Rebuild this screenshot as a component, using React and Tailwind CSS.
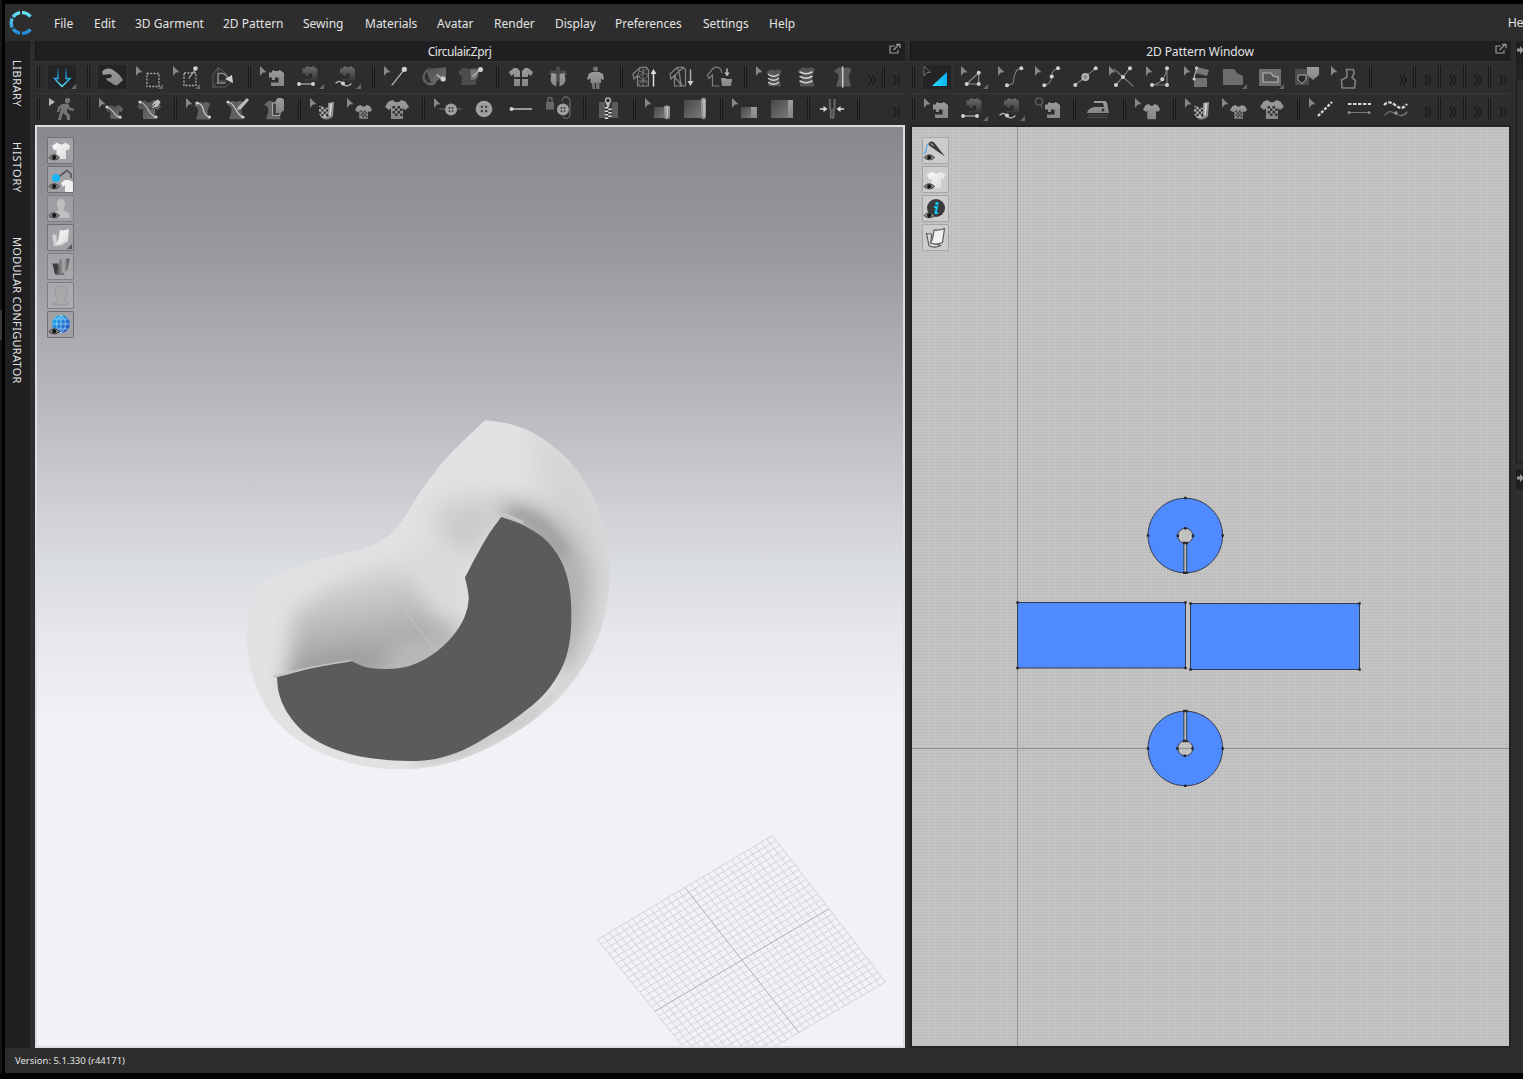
import React from "react";

const MENU = [
  ["File", "w-[40px]"], ["Edit", "w-[41px]"], ["3D Garment", "w-[88px]"], ["2D Pattern", "w-[80px]"],
  ["Sewing", "w-[62px]"], ["Materials", "w-[72px]"], ["Avatar", "w-[57px]"], ["Render", "w-[61px]"],
  ["Display", "w-[60px]"], ["Preferences", "w-[88px]"], ["Settings", "w-[66px]"], ["Help", "w-[40px]"],
];

/* ---------- shared glyph parts ---------- */
const G = "url(#metal)";
const D = "url(#dim)";
const at = (x, y, s = 1, sy = s) => `translate(${x} ${y}) scale(${s} ${sy})`;

const Cur = ({ x = 4, outline }) => (
  <path d={`M${x} 5l6.500 6.300-3.600.3L${x} 15z`} fill={outline ? "none" : "#888"} stroke={outline ? "#777" : "none"} strokeWidth=".9" />
);
const Corner = () => <path d="M31 23v5h-5z" fill="#696969" />;
const Dot = ({ x, y, r = 2 }) => <circle cx={x} cy={y} r={r} fill="#d0d0d0" />;
const Line = ({ d, w = 1.2, c = "#8d8d8d", dash }) => <path d={d} fill="none" stroke={c} strokeWidth={w} strokeDasharray={dash} strokeLinecap={dash ? "butt" : "round"} />;
const Machine = ({ x, y, f = G }) => (
  <g transform={at(x, y)} fill={f}>
    <path d="M0 2.500h3V1h9l3 2v13H2v-3.500h7.500V7.500H6V10H3V7.500H0zM4 0h1.200v1H4zM10 0h1.500v1H10z" />
  </g>
);
const Shirt = ({ x, y, s = 1, sy, f = G }) => (
  <path transform={at(x, y, s, sy)} fill={f} d="M8 0L3.500 1.500 0 7l4 3 2-1.800V19h12V8.200l2 1.800 4-3-3.500-5.500L16 0c-1.500 3-6.500 3-8 0z" />
);
const Torso = ({ x, y, s = 1, f = G }) => (
  <path transform={at(x, y, s)} fill={f} d="M5 0h3c1 1.500 3 1.500 4 0h3l3 2-1.500 4c-2 3-1.500 5 1 12v1.500H2.500V18c2.500-7 3-9 1-12L0 4l2-2z" />
);
const Checks = ({ x, y, u }) => (
  <g transform={at(x, y, u)} fill="#353535">
    <path d="M0 0h1v1H0zM2 0h1v1H2zM1 1h1v1H1zM3 1h1v1H3zM0 2h1v1H0zM2 2h1v1H2zM1 3h1v1H1zM3 3h1v1H3z" />
  </g>
);
const Buttonish = ({ x, y, r }) => (
  <g>
    <circle cx={x} cy={y} r={r} fill="#9a9a9a" />
    <circle cx={x} cy={y} r={r - 1.6} fill="none" stroke="#b0b0b0" strokeWidth=".7" />
    {[[-1, -1], [1, -1], [-1, 1], [1, 1]].map(([a, b]) => <circle key={`${a}${b}`} cx={x + a * r * 0.26} cy={y + b * r * 0.26} r={r * 0.14} fill="#333" />)}
  </g>
);
const Rings = ({ x, w, ys }) => ys.map((y) => <Line key={y} d={`M${x} ${y}q${w / 2} 3.400 ${w} 0`} w={1.5} c="#d5d5d5" />);
const Pen = ({ x, y }) => (
  <g transform={at(x, y)}><path d="M0 10l3-7 5-3 3 3-3 5z" fill="#bdbdbd" stroke="#333" strokeWidth=".7" /><path d="M0 10l5-5" stroke="#333" /></g>
);
const PatternRoll = () => (
  <g>
    <Cur /><path d="M13 13l9 2-1 11-5-1-3-4z" fill="#b5b5b5" /><Checks x={13} y={14} u={2.300} />
    <path d="M22 10l6-1-1 14c-1 3-6 4-11 3 4 0 6-2 6-4z" fill={G} /><path d="M25 10.500l-1 12" stroke="#dedede" strokeWidth="1.500" />
  </g>
);
const SmallChecked = () => <g><Cur /><Shirt x={12} y={12} s={0.72} /><Checks x={17.500} y={17.500} u={1.700} /></g>;
const BigChecked = () => <g><Shirt x={5} y={7} s={1} /><Checks x={12.500} y={13} u={2.500} /></g>;
const MachineLine = () => <g><Machine x={9.500} y={5} f="url(#fade)" /><Line d="M6 23h14" c="#ccc" /><Dot x={6} y={23} /><Dot x={20} y={23} /><Corner /></g>;
const MachineWave = () => <g><Machine x={10} y={5} f="url(#fade)" /><Line d="M6 22c3-3 5-1 7 1s5 3 8 0" c="#aaa" w={1.500} /><Dot x={13} y={22.500} /><Corner /></g>;
const Wire = ({ mesh }) => (
  <g>
    <Line d="M12 6.500l6-.5 2.500 3V25H9.500V14.500L6 18l-1-5z" c="#858585" />
    <Line d={mesh ? "M10 9l10 5M19 7l-9 10M10 15l10 8M20 15l-10 9M15 6v19M12 7l-2 7M10 20h10" : "M12 7c4 4 2 14 5 18M18 7c-5 4-8 6-8 10 3 2 5 5 6 8"} c="#858585" w={mesh ? 0.800 : 1.200} />
  </g>
);

/* ---------- toolbar icons, each on a 37×32 field ---------- */
const I = {
  simulate: <g><rect x="2" y="3" width="30" height="26" rx="1" fill="#242426" stroke="#393939" /><path d="M13 7v10.500H9.500L17 25.500l8-8h-4V7" fill="none" stroke="url(#cy)" strokeWidth="1.500" /><Corner /></g>,
  hand: <g><rect x="2" y="3" width="30" height="26" rx="1" fill="#242426" stroke="#393939" /><path d="M7 11C9 7.500 14 6.500 18 9c4 2.500 7 5 8.500 8l1.500 2-6 5.500c-3-.5-5-2-7-3.500-3-1.500-4-2.500-4-3.500l3-.5c2 0 3-1 3-2.500-1-1.500-3-1.500-5-1L8 14z" fill={G} /></g>,
  select: <g><Cur /><rect x="15" y="12.500" width="12" height="13" fill="none" stroke="#aaa" strokeWidth="1.300" strokeDasharray="2 1.300" /><Corner /></g>,
  selectPin: <g><Cur /><rect x="15" y="12" width="12" height="12.500" fill="none" stroke="#aaa" strokeWidth="1.300" strokeDasharray="2 1.300" /><Line d="M26 9l-6 8" c="#bbb" /><Dot x={26.500} y={7.500} r={2.300} /><Corner /></g>,
  box3d: <g><Line d="M12 7v13l-5 6h13l5-5M12 7l8 5M7 14l5-7M7 14v12M12 20h8" c="#5e5e5e" w={1} /><Line d="M12 13v9h7M12 13c4-2 8 0 10 4" c="#8c8c8c" w={1.500} /><path d="M19 18l7-4 1 8z" fill="#d0d0d0" /></g>,
  sewSeg: <g><Cur /><Machine x={13} y={9} /></g>,
  machineLine: <MachineLine />, machineWave: <MachineWave />,
  pin: <g><Cur /><Line d="M24 9L12 24" c="#aaa" w={1.300} /><Dot x={24.300} y={8.300} r={2.600} /></g>,
  rollPin: <g><path d="M12 7c4 1 10 0 17-1v14c-4-3-8-3-11 3-4 3-9 1-12-3-2-5 1-11 6-13z" fill={D} /><path d="M9 21c-4-4-2-9 1-11 3 2 1 8 6 12" fill="#333" stroke="#666" strokeWidth="1.200" /><Line d="M20 14l6 4" c="#ccc" /><Dot x={26} y={18} r={2.500} /></g>,
  shirtPin: <g><path d="M8 7h5c1 1.500 3 1.500 4 0h6l-1 17H7c1-4 1-7 0-10H5v-4z" fill="#4c4c4c" /><path d="M16 8h9l-1 8-3 3h-5z" fill="#747474" stroke="#333" strokeWidth=".6" /><Line d="M19 15l7-6" c="#bbb" /><Dot x={26.500} y={8.500} r={2.500} /></g>,
  four: <g fill={G}><path d="M10 7h3l3 3v6h-6v-3l-3 2-2-4zM24 7h-3l-3 3v6h6v-3l3 2 2-4zM10 18h6v7h-6zM18 18h6v7h-6z" /></g>,
  vest: <g><circle cx="17" cy="7.500" r="2.300" fill="#4a4a4a" /><path d="M9 9.500h16l1 4.500h-8v7h-2v-7H8z" fill="#484848" /><path d="M10.500 12l5 1v12.500l-4-2-2-4zM23.500 12l-5 1v12.500l4-2 2-4z" fill={G} /></g>,
  avatar: <g fill="#747474"><circle cx="17.500" cy="8" r="2.500" /><path d="M13.500 21h3.500v7h-2.500zM18 21h3.500v7H18zM9 16h2v3H9.500zM24 16h2l-.5 3H24z" /><path d="M14 11h7l4 2 1 5h-3v4H12.500v-4h-3l1-5z" fill={G} /></g>,
  wireUp: <g><Wire mesh /><Line d="M25.500 12v13" c="#ddd" w={1.500} /><path d="M25.500 8l3 5h-6z" fill="#ddd" /></g>,
  wireDown: <g><Wire /><Line d="M25.500 9v12" c="#aaa" w={1.500} /><path d="M25.500 25l3-5h-6z" fill="#ccc" /></g>,
  wireFolder: <g><Line d="M17 25h-6.500V14L7 17.500 5.500 14 11 7.500c2-1.500 5-1.500 7 0l2 4" c="#7d7d7d" /><path d="M19 17h4l1 1h6l-1 7H20z" fill={G} /><Line d="M25 8v4" c="#bbb" w={1.500} /><path d="M25 15.500l2.700-4h-5.400z" fill="#bbb" /></g>,
  ringsSel: <g><Cur /><Torso x={14} y={8.500} s={0.860} f="#555" /><Rings x={16.500} w={10} ys={[13.500, 17.500, 21.500]} /></g>,
  rings: <g><Torso x={8.500} y={6.500} s={0.970} f="#555" /><Rings x={11} w={12} ys={[11, 15.500, 20]} /></g>,
  formLine: <g><Torso x={8} y={6.500} s={0.970} f="#5a5a5a" /><Line d="M16.700 6v20" c="#c8c8c8" w={1.600} /></g>,

  walk: <g><path d="M4 5l6 4-6 4z" fill="#b5b5b5" /><circle cx="22.500" cy="7.500" r="2.600" fill="#777" /><path d="M17 11l6-.5 2 4 4 1.500v2l-5-1-1.500-2-.5 4 3 3v5h-3l-.5-4-3.500-3-2 7h-3l3-12-1 .5-1 3.500h-2l1-5z" fill="#747474" /></g>,
  shirtCurveSel: <g><Cur /><Shirt x={11} y={12} s={0.720} f={D} /><Line d="M12 14c7 2 6 9 14 11" c="#bbb" /><Dot x={12} y={14} r={1.600} /><Dot x={25} y={24} r={1.600} /></g>,
  shirtCurve: <g><Shirt x={5} y={7} s={1} f={D} /><Line d="M8 9c9 2 7 13 16 15" c="#bbb" /><Dot x={8} y={9} r={1.600} /><Dot x={24} y={24} r={1.600} /><Pen x={18} y={6} /></g>,
  torsoCurveSel: <g><Cur /><Torso x={12} y={9} s={0.900} f="#606060" /><Line d="M15 10c9 1 4 13 13 14" c="#ccc" /><Dot x={15} y={10} r={1.600} /><Dot x={27.500} y={24} r={1.600} /></g>,
  torsoCurve: <g><Torso x={8} y={8} s={0.940} f="#606060" /><Line d="M9 9c9 2 7 13 15 15" c="#ccc" /><Dot x={9} y={9} r={1.600} /><Dot x={24} y={24} r={1.600} /><path d="M19 14L28 5l2 2-8 9-4 1z" fill="#bdbdbd" /></g>,
  torsoSheet: <g><Torso x={8} y={8} s={0.940} f="#676767" /><path d="M21 10h-4.500v12.500H24V20" fill="#444" stroke="#aaa" /><path d="M20 7l2-2h4l2 2v10l-3 3h-5z" fill={G} /></g>,
  patternRoll: <PatternRoll />, smallChecked: <SmallChecked />, bigChecked: <BigChecked />,
  buttonSel: <g><Cur /><Line d="M10 16h21" c="#555" w={1.500} /><Buttonish x={21} y={16.500} r={6} /></g>,
  button: <Buttonish x={17} y={16} r={8.300} />,
  buttonhole: <g><path d="M7 16h21" stroke="#999" strokeWidth="2" /><Dot x={7.500} y={16} r={2} /></g>,
  lockButton: <g><rect x="5" y="9" width="8" height="7.500" fill="#686868" /><path d="M7 9V6.500a2 2 0 014 0V9" fill="none" stroke="#686868" strokeWidth="1.500" /><path d="M21 8a4 4 0 018 0v14a4 4 0 01-7 2" fill="none" stroke="#666" strokeWidth="1.300" /><Buttonish x={22} y={16.500} r={6} /></g>,
  zipper: <g><path d="M8 9h19v16H8z" fill="#5a5a5a" /><path d="M14 9h7v17h-7z" fill="#383838" /><path d="M15.500 14v12" stroke="#ddd" strokeWidth="3.500" strokeDasharray="1.500 2" /><path d="M19 15.500v10" stroke="#ddd" strokeWidth="3.500" strokeDasharray="1.500 2" /><circle cx="17" cy="7.500" r="2.500" fill="none" stroke="#aaa" strokeWidth="1.500" /><path d="M15 9h4l-1 5h-2z" fill="#bbb" /></g>,
  rollSel: <g><Cur /><path d="M13 14h10v11H13z" fill={D} /><path d="M23 14c0-2 6-2 6 0v10c0 3-6 3-6 0z" fill={G} /><path d="M25 25c2-1 1-10 1-11" stroke="#ddd" fill="none" /></g>,
  rollBig: <g><path d="M6 7h17v18H6z" fill={D} /><path d="M23 7c0-3 5-3 5 0v17c0 3-5 3-5 0z" fill={G} /><path d="M26 7v17" stroke="#ddd" /></g>,
  foldSel: <g><Cur /><path d="M13 14h10v11H13z" fill={D} /><path d="M23 14h6v11h-6z" fill={G} /></g>,
  foldBig: <g><path d="M6 7h17v18H6z" fill={D} /><path d="M23 7h5v18h-5z" fill={G} /></g>,
  fork: <g><path d="M14.500 6v9c0 1 1 2 1 3v7h3.500v-7c0-1 1-2 1-3V6" fill="#555" stroke="#747474" strokeWidth="1" /><path d="M17.200 6v9" stroke="#2a2a2a" strokeWidth="2" /><path d="M5 16h4M29 16h-4" stroke="#ddd" strokeWidth="1.600" /><path d="M12.500 16l-4-3v6zM21.500 16l4-3v6z" fill="#ddd" /></g>,

  transform: <g><rect x="2" y="3" width="30" height="26" rx="1" fill="#242426" stroke="#393939" /><Cur outline /><path d="M27 11v14H12z" fill="url(#cyfill)" /></g>,
  editPat: <g><Cur /><Line d="M21.700 11.700L9.700 23h12z" /><Dot x={21.700} y={11.700} /><Dot x={9.700} y={23} /><Dot x={21.700} y={23} /><Corner /></g>,
  curve: <g><Cur /><Line d="M13 24.300c10-1 5-5 7.500-10 1.500-4 2-6 6.800-7" c="#777" /><Dot x={13} y={24.300} /><Dot x={27.300} y={7.300} /></g>,
  curvePt: <g><Cur /><Line d="M13.300 24.300c6-1 7-5 7.400-9 0-4 2-7 6.300-8" c="#777" /><Dot x={13.300} y={24.300} /><Dot x={20.700} y={15.500} /><Dot x={27} y={7.300} /></g>,
  addPt: <g><Line d="M7.300 24L27.700 7.300" c="#777" /><Dot x={7.300} y={24} /><Dot x={27.700} y={7.300} /><circle cx="17.300" cy="16" r="4" fill="#b5b5b5" /><path d="M17.300 13.500v5M14.800 16h5" stroke="#777" /></g>,
  cut: <g><Cur /><Line d="M11 24L25 7.300M18 16l10 9M9 8l9 8" c="#777" /><Dot x={11} y={24} /><Dot x={18} y={16} /><Dot x={25} y={7.300} /></g>,
  wedge: <g><Cur /><Line d="M10 24h15V7.300M10 24c7-1 13-6 15-16.700" c="#777" /><Dot x={10} y={24} /><Dot x={25} y={24} /><Dot x={25} y={7.300} /><Dot x={20.300} y={18.300} /></g>,
  flip: <g><Cur x={5} /><path d="M18 6l12 3-2 6-12-3z" fill="#777" /><path d="M15 17h13v9H15z" fill="#717171" /><Line d="M18 6l-3 11" c="#aaa" /><Dot x={17.500} y={7} r={1.500} /><Dot x={15} y={18} r={1.500} /></g>,
  polygon: <g><path d="M7 8h11l3 4 6 3v9H7z" fill="#6c6c6c" /><Corner /></g>,
  inner: <g><rect x="6" y="8" width="22" height="17" fill="#6e6e6e" /><path d="M10 12h8l2 3 5 1v5H10z" fill="#555" stroke="#b5b5b5" strokeWidth="1.200" /><Corner /></g>,
  pocket: <g><rect x="5" y="8" width="14" height="16" fill="#4c4c4c" /><path d="M8 14h8v5l-4 3.500L8 19z" fill="#2a2a2a" stroke="#aaa" /><path d="M17 6h12v8l-6 5-6-5z" fill={G} /></g>,
  trace: <g><Cur /><path d="M19.500 8.500h7l.5 4-2 4 3.500 3-1 7.500H15l-.5-8 5-2.500.5-4z" fill="none" stroke="#7d7d7d" strokeWidth="1.700" /></g>,
  checkSew: <g><circle cx="8" cy="8.500" r="3.500" fill="none" stroke="#666" strokeWidth="1.200" /><path d="M9.500 11.500l2 4" stroke="#666" /><Machine x={14} y={9} /></g>,
  iron: <g><path d="M6 20c1-4 5-6 9-6h8l-1-4h-9V8h10c2 0 3 1 3.300 3L28 20z" fill={G} /><path d="M7 22h20M6 24.500h20" stroke="#4b4b4b" strokeWidth="1.200" /><circle cx="22" cy="17" r="1.500" fill="#333" /></g>,
  shirtSel: <g><Cur /><Shirt x={12} y={11} s={0.720} sy={0.800} /></g>,
  topSel: <g><Cur /><Line d="M13 23L27 9" c="#d8d8d8" w={2.300} dash="3 1.500" /></g>,
  topSeg: <g><Line d="M6 11h23" c="#d8d8d8" w={2.200} dash="3.500 1.500" /><Line d="M7 19.500h20" c="#777" /><circle cx="7" cy="19.500" r="1.500" fill="#888" /><circle cx="27" cy="19.500" r="1.500" fill="#888" /></g>,
  topFree: <g><Line d="M5 12c4-4 7-3 11 0s7 5 12-1" c="#d8d8d8" w={2.300} dash="3.500 1.500" /><Line d="M6 22c3-4 5-4 9-2s8 5 13-1" c="#777" /><circle cx="17" cy="20" r="1.700" fill="#999" /></g>,
};

const Tool = ({ name }) => <svg viewBox="0 0 37 32" className="-mt-px h-8 w-[37px] shrink-0">{I[name]}</svg>;
const Sep = ({ first }) => (
  <div className={first ? "flex w-[10px] shrink-0 pl-[2px]" : "flex w-[13px] shrink-0 pl-[5px]"}>
    <div className="mt-[4px] mb-[5px] w-[3px] border-x border-[#191919] bg-[#353535]" />
  </div>
);
const More = () => (
  <svg viewBox="0 0 12 32" className="-mt-px h-8 w-3 shrink-0" fill="none" stroke="#171717" strokeWidth="1.100"><path d="M4 14l2.500 5L4 24M7.500 14l2.500 5-2.500 5" /></svg>
);
const Toolbar = ({ groups, tail }) => (
  <div className="flex h-8 w-full overflow-hidden border-t border-[#383838] bg-[#2d2d2d]">
    {groups.map((g, i) => (
      <React.Fragment key={i}><Sep first={i === 0} />{g.map((n) => <Tool key={n} name={n} />)}</React.Fragment>
    ))}
    <div className="ml-auto flex pr-[3px]">{tail.map((t, i) => (t === "|" ? <Sep key={i} /> : <More key={i} />))}</div>
  </div>
);

const L1 = [["simulate"], ["hand", "select", "selectPin", "box3d"], ["sewSeg", "machineLine", "machineWave"], ["pin", "rollPin", "shirtPin"], ["four", "vest", "avatar"], ["wireUp", "wireDown", "wireFolder"], ["ringsSel", "rings", "formLine"]];
const L2 = [["walk"], ["shirtCurveSel", "shirtCurve"], ["torsoCurveSel", "torsoCurve", "torsoSheet"], ["patternRoll", "smallChecked", "bigChecked"], ["buttonSel", "button", "buttonhole", "lockButton"], ["zipper"], ["rollSel", "rollBig"], ["foldSel", "foldBig"], ["fork"], []];
const R1 = [["transform", "editPat", "curve", "curvePt", "addPt", "cut", "wedge", "flip", "polygon", "inner", "pocket", "trace"], []];
const R2 = [["sewSeg", "machineLine", "machineWave", "checkSew"], ["iron"], ["shirtSel"], ["patternRoll", "smallChecked", "bigChecked"], ["topSel", "topSeg", "topFree"]];

const PanelTitle = ({ children, tight }) => (
  <div className="flex h-5 shrink-0 items-center border-l border-[#151515] bg-[#1f1f21] text-[12px] text-[#e3e3e3]">
    <div className={tight ? "flex-1 pt-[2px] pr-[6px] text-center tracking-[-0.45px]" : "flex-1 pt-[2px] pr-[6px] text-center tracking-[-0.1px]"}>{children}</div>
    <svg viewBox="0 0 12 12" className="mr-[4px] mb-1 h-3 w-3" fill="none" stroke="#999" strokeWidth="1.200"><path d="M6 3H1v7h8V7M4.500 7L10 1.500M7 1.300h4v4" /></svg>
  </div>
);

/* ---------- view toggles ---------- */
const Eye = () => <g><path d="M2 20.500c3-3.500 7-3.500 10.500 0-3 3-7.500 3-10.500 0z" fill="#8f8f8f" stroke="#2a2a2a" strokeWidth=".9" /><circle cx="7.200" cy="20.300" r="2.100" fill="#161616" /></g>;
const Tee = () => <path d="M10 5.500L5 9l2 4.500 2.500-1V22h9.500v-9.500l2.500 1 2-4.500-5-3.500c-1.500 2.500-6.500 2.500-8.500 0z" fill="url(#white)" />;
const V = {
  tee: <g><Tee /><Eye /></g>,
  pin: <g><path d="M9 13L20 4.500M20 4l4 4v4" stroke="#55555a" strokeWidth="1.600" fill="none" /><circle cx="9" cy="12" r="4" fill="#18b4f4" /><path d="M14 17l4-3h4l4 2v10h-8v-7l-2 2z" fill="#f0f0f0" /><Eye /></g>,
  body: <g><path d="M14 4c5 0 5 6 2.500 9v2.500L21 17c1 1 1.500 3 1.500 6h-16c0-3 .5-5 1.500-6l3.500-1.500V13C9 10 9 4 14 4z" fill="#bfbfc1" /><Eye /></g>,
  sheet: <g><path d="M5 10.500h4.500l.5 8.500 8 1.500-8 1.500H7z" fill="#d4d4d4" stroke="#b5b5b5" strokeWidth=".4" /><path d="M13 6c3 1 6 0 9-1l-1 12c-3 2-7 4-12 3 3-4 3-9 4-14z" fill="url(#white)" /></g>,
  dark: <g><path d="M5.500 10.500H11l2 8 5 3H8z" fill="#3c3c3c" /><path d="M13 6c3 1 6 0 9.500-1l-2 12c-3 3-7 5-12 4 3-5 3.500-10 4.500-15z" fill="url(#darksheet)" /></g>,
  head: <path d="M14 4c6 0 7 5 5.500 9-1 3-2 3-1.500 6l4 2v2H6v-2l4-2c.5-3-.5-3-1.500-6C7 9 8 4 14 4z" fill="#a9a9ab" stroke="#929295" strokeWidth=".8" />,
  globe: <g><circle cx="14" cy="13" r="9" fill="url(#globe)" /><path d="M5 13h18M14 4v18M7 8h14M7 18h14M14 4c-6 5-6 13 0 18M14 4c6 5 6 13 0 18" stroke="#a9dcf8" strokeWidth=".7" fill="none" /><Eye /></g>,
  needle: <g><path d="M2 17c4-2 0-9 6-11" stroke="#55a9ee" fill="none" strokeWidth="1.300" /><path d="M7 6c1-2 4-2 5.500 0L23 19.500 8.500 9.500C6.500 8.500 6.500 7 7 6z" fill="#3a3a3a" /><path d="M8.500 6.500l3 2.300" stroke="#ccc" /><Eye /></g>,
  info: <g><circle cx="14" cy="13" r="9" fill="#3b3b3b" /><circle cx="15" cy="8.500" r="1.700" fill="#10c6ee" /><path d="M12 12h3l-1.500 6h2.500" stroke="#10c6ee" strokeWidth="2" fill="none" /><Eye /></g>,
  sheetOutline: <g><path d="M4.500 9.500L9.500 10l-.5 9 10 2.500c-4 2-9 2-12 0z" fill="#ddd" stroke="#5a5a5a" strokeWidth="1.200" strokeLinejoin="round" /><path d="M12 6c4 .5 7 0 10.500-1.500l-2 14c-4 2-9 1.500-12 .5 2.500-4 3-8 3.500-13z" fill="#f1f1f1" stroke="#5a5a5a" strokeWidth="1.200" strokeLinejoin="round" /></g>,
};
const Toggle = ({ name, strong, corner, light }) => (
  <div className={`h-[27px] w-[27px] rounded-[1px] border ${light ? "border-[#a6a6a6] bg-[#cccccc]" : strong ? "border-[#707074] bg-[#a0a0a5]" : "border-[#7e7e83] bg-white/10"}`}>
    <svg viewBox="1 1 25 25" className="h-full w-full">{V[name]}{corner && <path d="M25 20v5h-5z" fill="#555" />}</svg>
  </div>
);

/* ---------- scene ---------- */
const T = [772.5, 835.5], LF = [597.5, 939.5], RT = [885.5, 982], B = [712, 1083];
const mix = (a, b, t) => [a[0] + (b[0] - a[0]) * t, a[1] + (b[1] - a[1]) * t];
const seg = (a, b) => `M${a[0].toFixed(1)} ${a[1].toFixed(1)}L${b[0].toFixed(1)} ${b[1].toFixed(1)}`;
const N = 30;
const floor = Array.from({ length: N + 1 }, (_, i) => seg(mix(LF, T, i / N), mix(B, RT, i / N)) + seg(mix(T, RT, i / N), mix(LF, B, i / N))).join("");

/* Smooth curve through a run of points; runs are joined at sharp corners. */
const smooth = (p) => p.slice(0, -1).map((b, i) => {
  const a = p[i - 1] || b, c = p[i + 1], d = p[i + 2] || c;
  return `C${b[0] + (c[0] - a[0]) / 6} ${b[1] + (c[1] - a[1]) / 6} ${c[0] - (d[0] - b[0]) / 6} ${c[1] - (d[1] - b[1]) / 6} ${c[0]} ${c[1]}`;
}).join("");
const outline = (runs) => `M${runs[0][0][0]} ${runs[0][0][1]}${runs.map(smooth).join("")}Z`;
const OUTER = outline([
  [[765, 60], [850, 74], [930, 110], [1010, 175], [1070, 255], [1113, 355], [1136, 460], [1138, 560], [1120, 665], [1075, 775], [1005, 875], [920, 953], [820, 1020], [720, 1068], [620, 1098], [510, 1109], [400, 1098], [290, 1066], [190, 1010], [120, 940], [75, 850], [54, 770], [52, 690], [64, 610], [92, 550]],
  [[92, 550], [180, 508], [270, 478], [360, 456], [430, 434], [480, 402], [520, 356], [558, 295], [600, 235], [660, 162], [765, 60]],
]);
const INNER = outline([
  [[814, 351], [880, 376], [945, 418], [992, 480], [1017, 555], [1024, 640], [1018, 730], [995, 805], [945, 880], [870, 945], [780, 1005], [700, 1050], [620, 1076], [540, 1083], [450, 1078], [370, 1065], [290, 1038], [220, 995], [170, 935], [147, 880], [141, 832]],
  [[141, 832], [250, 804], [365, 784]],
  [[365, 784], [410, 802], [470, 807], [540, 797], [610, 762], [665, 712], [702, 655], [716, 595], [705, 533]],
  [[705, 533], [735, 475], [775, 405], [814, 351]],
]);

const Scene = () => (
  <svg viewBox="37 127 866 919" className="block h-full w-full">
    <defs>
      <clipPath id="body"><path d={OUTER} /></clipPath>
      <filter id="b12" x="-50%" y="-50%" width="200%" height="200%"><feGaussianBlur stdDeviation="14" /></filter>
      <filter id="b30" x="-50%" y="-50%" width="200%" height="200%"><feGaussianBlur stdDeviation="32" /></filter>
      <filter id="b45" x="-50%" y="-50%" width="200%" height="200%"><feGaussianBlur stdDeviation="45" /></filter>
      <linearGradient id="valley" gradientUnits="userSpaceOnUse" x1="270" y1="520" x2="320" y2="810"><stop offset="0" stopColor="#dadada" /><stop offset=".5" stopColor="#bdbdbd" /><stop offset="1" stopColor="#9c9c9c" /></linearGradient>
    </defs>
    <path d={floor} stroke="#d3d2d6" strokeWidth="1" fill="none" />
    <path d={seg(mix(LF, T, 0.5), mix(B, RT, 0.5)) + seg(mix(T, RT, 0.5), mix(LF, B, 0.5))} stroke="#b9b8bc" strokeWidth="1" />
    <g transform="translate(230 400) scale(.33333)">
      <g clipPath="url(#body)">
        <path d={OUTER} fill="#e2e2e2" />
        <path d="M900 60C1000 100 1180 260 1160 560L1060 850L1000 600L940 300Z" fill="#d3d3d3" filter="url(#b45)" />
        <path d="M170 860L190 640C290 560 400 490 500 490C620 520 690 660 660 760L370 860Z" fill="url(#valley)" filter="url(#b30)" />
        <path d="M470 740C560 720 640 680 690 640L640 790L480 830Z" fill="#b9b9b9" filter="url(#b30)" />
        <path d="M600 350C700 280 790 280 840 330L760 420L710 500L640 430Z" fill="#c8c8c8" filter="url(#b45)" />
        <path d="M520 440C600 410 690 450 705 540C725 600 690 670 640 660C580 620 550 540 520 440Z" fill="#dadada" filter="url(#b30)" />
        <path d="M790 310C900 270 1030 370 1070 500C1090 620 1050 740 1000 860L960 700L980 520L830 350Z" fill="#aeaeae" filter="url(#b30)" />
        <path d="M815 335C900 300 1000 390 1020 470L980 470L900 380Z" fill="#a3a3a3" filter="url(#b12)" />
        <path d="M1040 820L900 980L700 1080L540 1100L540 1083L900 920Z" fill="#cccccc" filter="url(#b12)" />
        <path d="M200 800L280 765L400 750L365 784L170 825Z" fill="#a2a2a2" filter="url(#b12)" />
        <path d="M460 500C490 590 540 660 620 755" fill="none" stroke="#cbcbcb" strokeWidth="2" />
        <path d="M130 830Q250 800 365 784M804 342Q812 334 826 343L880 368" fill="none" stroke="#c6c6c6" strokeWidth="8" />
      </g>
      <path d={INNER} fill="#5b5b5b" />
    </g>
  </svg>
);

const dots = (pts) => pts.map(([x, y]) => <rect key={`${x},${y}`} x={x - 1.2} y={y - 1.2} width="2.400" height="2.400" fill="#222" />);
const Patterns = () => (
  <svg viewBox="912 127 597 919" className="block h-full w-full">
    <defs><pattern id="fine" width="3" height="3" patternUnits="userSpaceOnUse"><path d="M0 .5h3M.5 0v3" stroke="#bdbdbd" strokeWidth="1" /></pattern></defs>
    <rect x="912" y="127" width="597" height="919" fill="#c6c6c6" />
    <rect x="912" y="127" width="597" height="919" fill="url(#fine)" />
    <path d="M1017.500 127v919M912 748.500h597" stroke="#909090" />
    <g fill="#4f8bff" stroke="#333c4d" strokeWidth="1">
      <path fillRule="evenodd" d="M1183.900 572.800A37.300 37.300 0 1 1 1186.700 572.800V543.200A7.500 7.500 0 1 0 1183.900 543.200Z" />
      <path fillRule="evenodd" d="M1183.900 711.200A37.300 37.300 0 1 0 1186.700 711.200V741A7.500 7.500 0 1 1 1183.900 741Z" />
      <path d="M1017.500 602.500h168v65.500h-168zM1190.500 603.500h169v66h-169z" />
    </g>
    {dots([[1185.3, 498], [1148, 535.5], [1222.7, 535.5], [1184.3, 572.8], [1186.5, 572.8], [1185.3, 528.3], [1177.8, 535.8], [1193, 535.8], [1184.2, 543], [1186.5, 543], [1185.3, 785.8], [1148, 748.5], [1222.7, 748.5], [1184.3, 711], [1186.5, 711], [1184.8, 755.8], [1177.3, 748.5], [1192.5, 748.5], [1184.2, 741], [1186.5, 741], [1017.5, 602.5], [1185.5, 602.5], [1017.5, 668], [1185.5, 668], [1190.5, 603.5], [1359.5, 603.5], [1190.5, 669.5], [1359.5, 669.5]])}
  </svg>
);

const Gradients = () => (
  <svg className="absolute h-0 w-0">
    <defs>
      <linearGradient id="metal" x1="0" y1="0" x2="0" y2="1"><stop offset="0" stopColor="#9c9c9c" /><stop offset="1" stopColor="#858585" /></linearGradient>
      <linearGradient id="dim" x1="0" y1="0" x2="1" y2="1"><stop offset="0" stopColor="#484848" /><stop offset="1" stopColor="#777" /></linearGradient>
      <linearGradient id="fade" x1="0" y1="0" x2="0" y2="1"><stop offset="0" stopColor="#6c6c6c" /><stop offset="1" stopColor="#303030" /></linearGradient>
      <linearGradient id="cy" gradientUnits="userSpaceOnUse" x1="0" y1="6" x2="0" y2="26"><stop offset="0" stopColor="#14425e" /><stop offset=".5" stopColor="#1e9fd6" /><stop offset="1" stopColor="#5fe6f2" /></linearGradient>
      <linearGradient id="cyfill" x1="0" y1="0" x2="1" y2="0"><stop offset="0" stopColor="#28e4ff" /><stop offset="1" stopColor="#0ab0f2" /></linearGradient>
      <linearGradient id="white" x1="0" y1="0" x2="1" y2="1"><stop offset="0" stopColor="#fbfbfb" /><stop offset="1" stopColor="#d8d8d8" /></linearGradient>
      <linearGradient id="darksheet" x1="0" y1="0" x2="1" y2="0"><stop offset="0" stopColor="#3c3c3c" /><stop offset=".6" stopColor="#aaa" /><stop offset="1" stopColor="#444" /></linearGradient>
      <linearGradient id="globe" x1="0" y1="0" x2="1" y2="1"><stop offset="0" stopColor="#1fc0f4" /><stop offset="1" stopColor="#2a3fb4" /></linearGradient>
      <linearGradient id="logo" gradientUnits="userSpaceOnUse" x1="0" y1="0" x2="0" y2="26"><stop offset="0" stopColor="#6cecf8" /><stop offset="1" stopColor="#1b7fd0" /></linearGradient>
    </defs>
  </svg>
);

const ArrowStub = () => <svg viewBox="0 0 7 8" className="mb-[2px] h-2 w-[7px]"><path d="M1 2.500h3V0l4 4-4 4V5.500H1z" fill="#999" /></svg>;

export default function App() {
  return (
    <div className="flex h-[1079px] w-[1523px] overflow-hidden bg-black font-['Noto_Sans','Open_Sans',sans-serif] text-[#e3e3e3]">
      <Gradients />
      <div className="w-[5px] shrink-0">
        <div className="h-[1074px] w-[2px] bg-[#161616] pt-[310px]"><div className="h-[30px] bg-[#3a3a3a]" /></div>
      </div>
      <div className="my-1 flex h-[1069px] w-[1518px] flex-col bg-[#2d2d2d]">
        <header className="flex h-[37px] shrink-0 items-center">
          <svg viewBox="0 0 24 26" className="ml-[4px] h-[26px] w-6" fill="none" stroke="url(#logo)" strokeWidth="3.400">
            <path d="M13 2.600q5 0 8.500 4M11 2.700q-4.500.8-7 4.300M3.200 8.500q-2 4.500 0 9.200M4.100 19q2.500 3.500 7 4.300M13 23.400q5 0 8.500-4" />
          </svg>
          <nav className="ml-[21px] flex pt-[2px] text-[12px]">
            {MENU.map(([m, w]) => <span key={m} className={`${w} whitespace-nowrap`}>{m}</span>)}
          </nav>
          <span className="ml-auto w-[15px] overflow-hidden whitespace-nowrap font-['Liberation_Sans'] text-[12px]">He</span>
        </header>
        <div className="flex h-[1007px] shrink-0">
          <aside className="flex w-[25px] shrink-0 flex-col items-center bg-[#1f1f21] pt-[19px] text-[11px] leading-none">
            <span className="h-[82px] tracking-[0.5px] [writing-mode:vertical-rl]">LIBRARY</span>
            <span className="h-[95px] tracking-[0.800px] [writing-mode:vertical-rl]">HISTORY</span>
            <span className="tracking-[0.3px] [writing-mode:vertical-rl]">MODULAR CONFIGURATOR</span>
          </aside>
          <section className="ml-[5px] flex w-[870px] shrink-0 flex-col">
            <PanelTitle tight>Circulair.Zprj</PanelTitle>
            <Toolbar groups={L1} tail={["m", "|", "m"]} />
            <Toolbar groups={L2} tail={["m"]} />
            <div className="relative h-[923px] border-2 border-[#dcdde2] bg-[linear-gradient(#88898d_0%,#97989d_13%,#b9b8bf_30%,#cdccd3_40%,#dadde2_48%,#e6e6ec_55%,#f2f1f6_65%)]">
              <Scene />
              <div className="absolute top-[10px] left-[10px] flex flex-col gap-[2px]">
                <Toggle name="tee" strong /><Toggle name="pin" strong /><Toggle name="body" /><Toggle name="sheet" strong corner />
                <Toggle name="dark" /><Toggle name="head" /><Toggle name="globe" strong />
              </div>
            </div>
          </section>
          <section className="ml-[5px] flex w-[601px] shrink-0 flex-col">
            <PanelTitle>2D Pattern Window</PanelTitle>
            <Toolbar groups={R1} tail={["m", "|", "m", "|", "m", "|", "m", "|", "m"]} />
            <Toolbar groups={R2} tail={["m", "|", "m", "|", "m", "|", "m"]} />
            <div className="relative h-[923px] border-2 border-[#242424]">
              <Patterns />
              <div className="absolute top-[10px] left-[10px] flex flex-col gap-[2px]">
                <Toggle name="needle" light /><Toggle name="tee" light /><Toggle name="info" light /><Toggle name="sheetOutline" light />
              </div>
            </div>
          </section>
          <aside className="ml-[5px] flex w-[7px] shrink-0 flex-col">
            <div className="flex h-5 items-center bg-[#1f1f21]"><ArrowStub /></div>
            <div className="h-[19px] bg-[#222]" />
            <div className="h-[383px] border-b border-l border-[#191919]" />
            <div className="mt-[6px] flex h-5 items-center bg-[#1f1f21]"><ArrowStub /></div>
          </aside>
        </div>
        <footer className="flex h-[25px] items-center pt-[2px] pl-[10px] text-[9.500px]">Version: 5.1.330 (r44171)</footer>
      </div>
    </div>
  );
}
